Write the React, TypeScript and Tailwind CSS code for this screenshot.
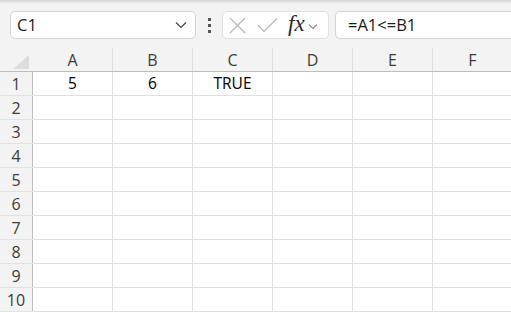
import React from "react";

const COLS = ["A", "B", "C", "D", "E", "F"];
const ROWS = [1, 2, 3, 4, 5, 6, 7, 8, 9, 10];
const DATA: Record<string, string> = { A1: "5", B1: "6", C1: "TRUE" };

function Chevron({ className }: { className?: string }) {
  return (
    <svg width="12" height="8" viewBox="0 0 12 8" className={className}>
      <path d="M1 1.5 L6 6.5 L11 1.5" fill="none" stroke="currentColor" strokeWidth="1.2" />
    </svg>
  );
}

export default function App() {
  return (
    <div
      className="w-[511px] h-[312px] overflow-hidden bg-white text-black"
      style={{ fontFamily: '"Open Sans", "Noto Sans", sans-serif' }}
    >
      <div className="h-[4px] bg-gradient-to-b from-[#d4d4d4] to-[#f3f3f3]" />
      <div className="h-[44px] bg-[#f3f3f3] flex items-start pt-[7px] pl-[10px]">
        {/* Name box */}
        <div className="w-[186px] h-[28px] bg-white border border-[#d4d4d4] rounded-[5px] flex items-center pl-[6px] pr-[8px] shrink-0">
          <span className="text-[16.5px] leading-none flex-1 text-[#1a1a1a]">C1</span>
          <Chevron className="text-[#444]" />
        </div>
        {/* dots */}
        <div className="w-[26px] h-[28px] flex flex-col items-center justify-center gap-[3px] shrink-0">
          <div className="w-[3px] h-[3px] bg-[#555]" />
          <div className="w-[3px] h-[3px] bg-[#555]" />
          <div className="w-[3px] h-[3px] bg-[#555]" />
        </div>
        {/* X check fx box */}
        <div className="w-[107px] h-[28px] bg-white border border-[#e0e0e0] rounded-[5px] flex items-center shrink-0 pl-[6px]">
          <svg width="17" height="17" viewBox="0 0 17 17" className="text-[#b4b4b4]">
            <path d="M1 1 L16 16 M16 1 L1 16" stroke="currentColor" strokeWidth="1.2" fill="none" />
          </svg>
          <svg width="21" height="16" viewBox="0 0 21 16" className="text-[#b4b4b4] ml-[11px]">
            <path d="M1 8.5 L7 14.5 L20 1.5" stroke="currentColor" strokeWidth="1.2" fill="none" />
          </svg>
          <span
            className="ml-[10px] text-[23px] leading-none italic text-[#2b2b2b] -mt-[4px]"
            style={{ fontFamily: '"Liberation Serif", "DejaVu Serif", serif' }}
          >
            fx
          </span>
          <svg width="10" height="7" viewBox="0 0 10 7" className="text-[#8a8a8a] ml-[3px] mt-[2px]">
            <path d="M1 1.5 L5 5.5 L9 1.5" stroke="currentColor" strokeWidth="1.1" fill="none" />
          </svg>
        </div>
        {/* formula box */}
        <div className="ml-[6px] w-[200px] h-[28px] bg-white border border-[#d4d4d4] rounded-[5px] flex items-center pl-[12px] shrink-0">
          <span className="text-[16.5px] leading-none text-[#1a1a1a]">=A1&lt;=B1</span>
        </div>
      </div>
      {/* Header row */}
      <div className="relative flex h-[24px] bg-[#f3f3f3] border-b border-[#bdbdbd]">
        <div className="absolute left-[32px] top-0 w-px h-px bg-[#222]" />
        <div className="w-[33px] h-full shrink-0 border-r border-[#f3f3f3] relative">
          <svg width="16" height="14" viewBox="0 0 16 14" className="absolute left-[13px] top-[7px]">
            <path d="M16 0 L16 14 L0 14 Z" fill="#dddddd" />
          </svg>
        </div>
        {COLS.map((c) => (
          <div
            key={c}
            className="w-[80px] shrink-0 h-full border-r border-[#dcdcdc] flex items-center justify-center text-[16px] text-[#3c3c3c]"
          >
            {c}
          </div>
        ))}
      </div>
      {ROWS.map((r) => (
        <div key={r} className="flex h-[24px] border-b border-[#e1e1e1]">
          <div className="w-[33px] shrink-0 h-full bg-[#f3f3f3] border-r border-[#bdbdbd] flex items-center justify-center text-[16px] text-[#3c3c3c]">
            {r}
          </div>
          {COLS.map((c) => (
            <div
              key={c}
              className="w-[80px] shrink-0 h-full border-r border-[#e1e1e1] flex items-center justify-center text-[15.5px] text-black"
            >
              {DATA[`${c}${r}`] ?? ""}
            </div>
          ))}
        </div>
      ))}
    </div>
  );
}
